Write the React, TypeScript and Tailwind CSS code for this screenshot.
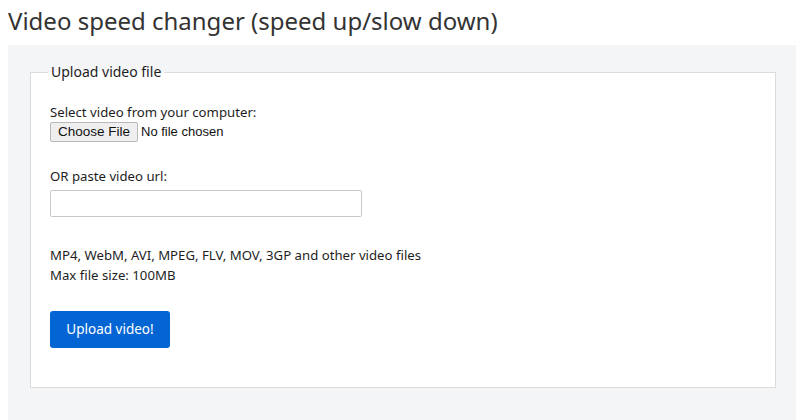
export default function App() {
  return (
    <div className="w-[800px] h-[420px] overflow-hidden bg-white" style={{ fontFamily: '"Noto Sans", sans-serif' }}>
      <h1 className="pl-[8px] pt-[4px] h-[45px] text-[24px] leading-[34px] text-[#333] font-normal">
        Video speed changer (speed up/slow down)
      </h1>
      <div className="ml-[8px] mr-[4px] h-[375px] bg-[#f4f5f7] pt-[18px] pl-[22px] pr-[20px]">
        <fieldset className="relative border border-[#dcdcdc] bg-white h-[325px] pl-[19px] pt-[30px] text-[13.2px] text-[#1e1e1e]">
          <legend className="-ml-[2px] px-[3px] text-[14px] leading-[18px] text-[#1e1e1e] -mb-[9px]">Upload video file</legend>
          <div className="leading-[20px]">Select video from your computer:</div>
          <div className="flex items-center h-[20px]" style={{ fontFamily: '"Liberation Sans", Arial, sans-serif' }}>
            <div className="h-[20px] w-[88px] flex items-center justify-center bg-[#efefef] border border-[#b8b8b8] rounded-[2px] text-[13.5px] text-[#111]">Choose File</div>
            <span className="ml-[3px] text-[13px] text-[#111]">No file chosen</span>
          </div>
          <div className="mt-[24px] leading-[20px]">OR paste video url:</div>
          <div className="mt-[4px] w-[312px] h-[27px] border border-[#c8c8c8] rounded-[2px] bg-white" />
          <div className="mt-[28px] leading-[20px]">MP4, WebM, AVI, MPEG, FLV, MOV, 3GP and other video files</div>
          <div className="leading-[20px]">Max file size: 100MB</div>
          <button className="mt-[26px] w-[120px] h-[37px] rounded-[3px] bg-[#0365d4] text-white text-[13.5px]">Upload video!</button>
        </fieldset>
      </div>
    </div>
  );
}
